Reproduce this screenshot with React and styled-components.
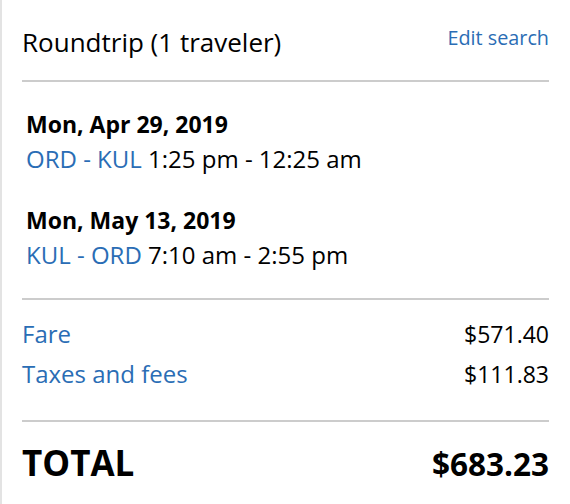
import React from 'react';
import styled, { createGlobalStyle } from 'styled-components';

const GlobalStyle = createGlobalStyle`
    html, body {
        margin: 0;
        padding: 0;
        background: #fff;
    }
    body {
        font-family: "Open Sans", "Noto Sans", sans-serif;
        color: #000;
    }
`;

const legs = [
    { date: 'Mon, Apr 29, 2019', route: 'ORD - KUL', time: '1:25 pm - 12:25 am' },
    { date: 'Mon, May 13, 2019', route: 'KUL - ORD', time: '7:10 am - 2:55 pm' },
];

const charges = [
    { label: 'Fare', amount: '$571.40' },
    { label: 'Taxes and fees', amount: '$111.83' },
];

const App = () => {
    return (
        <>
            <GlobalStyle />
            <Container>
                <Header>
                    <Title>Roundtrip (1 traveler)</Title>
                    <EditLink href="#">Edit search</EditLink>
                </Header>
                <Legs>
                    {legs.map((leg) => (
                        <Leg key={leg.date}>
                            <LegDate>{leg.date}</LegDate>
                            <LegRoute>
                                <Blue>{leg.route}</Blue> {leg.time}
                            </LegRoute>
                        </Leg>
                    ))}
                </Legs>
                <Charges>
                    {charges.map((c) => (
                        <ChargeRow key={c.label}>
                            <ChargeLabel>{c.label}</ChargeLabel>
                            <ChargeAmount>{c.amount}</ChargeAmount>
                        </ChargeRow>
                    ))}
                </Charges>
                <TotalRow>
                    <span>TOTAL</span>
                    <TotalAmount>$683.23</TotalAmount>
                </TotalRow>
            </Container>
        </>
    );
};

export default App;

const Container = styled.div`
    box-sizing: border-box;
    width: 570px;
    height: 504px;
    border-left: 2px solid #e3e3e3;
    padding: 0 21px 0 20px;
    display: flex;
    flex-direction: column;
`;

const Header = styled.div`
    display: flex;
    justify-content: space-between;
    align-items: flex-start;
    padding-top: 24px;
    padding-bottom: 20px;
    border-bottom: 2px solid #cccccc;
`;

const Title = styled.div`
    font-size: 26px;
    line-height: 36px;
`;

const EditLink = styled.a`
    margin-top: 1px;
    font-size: 19.8px;
    line-height: 26px;
    color: #2a6db5;
    text-decoration: none;
`;

const Legs = styled.div`
    display: flex;
    flex-direction: column;
    gap: 27px;
    padding: 26px 0 25px 4px;
    border-bottom: 2px solid #cccccc;
`;

const Leg = styled.div`
    display: flex;
    flex-direction: column;
`;

const LegDate = styled.div`
    font-size: 23px;
    font-weight: 700;
    line-height: 33px;
`;

const LegRoute = styled.div`
    font-size: 24px;
    line-height: 36px;
`;

const Blue = styled.span`
    color: #2a6db5;
`;

const Charges = styled.div`
    display: flex;
    flex-direction: column;
    padding: 14px 0 26px;
    border-bottom: 2px solid #cccccc;
`;

const ChargeRow = styled.div`
    display: flex;
    justify-content: space-between;
    align-items: baseline;
    line-height: 40px;
`;

const ChargeLabel = styled.span`
    font-size: 24px;
    color: #2a6db5;
`;

const ChargeAmount = styled.span`
    font-size: 23px;
`;

const TotalRow = styled.div`
    display: flex;
    justify-content: space-between;
    align-items: baseline;
    padding-top: 19px;
    font-size: 35px;
    font-weight: 700;
    line-height: 44px;
`;

const TotalAmount = styled.span`
    font-size: 31.5px;
`;
